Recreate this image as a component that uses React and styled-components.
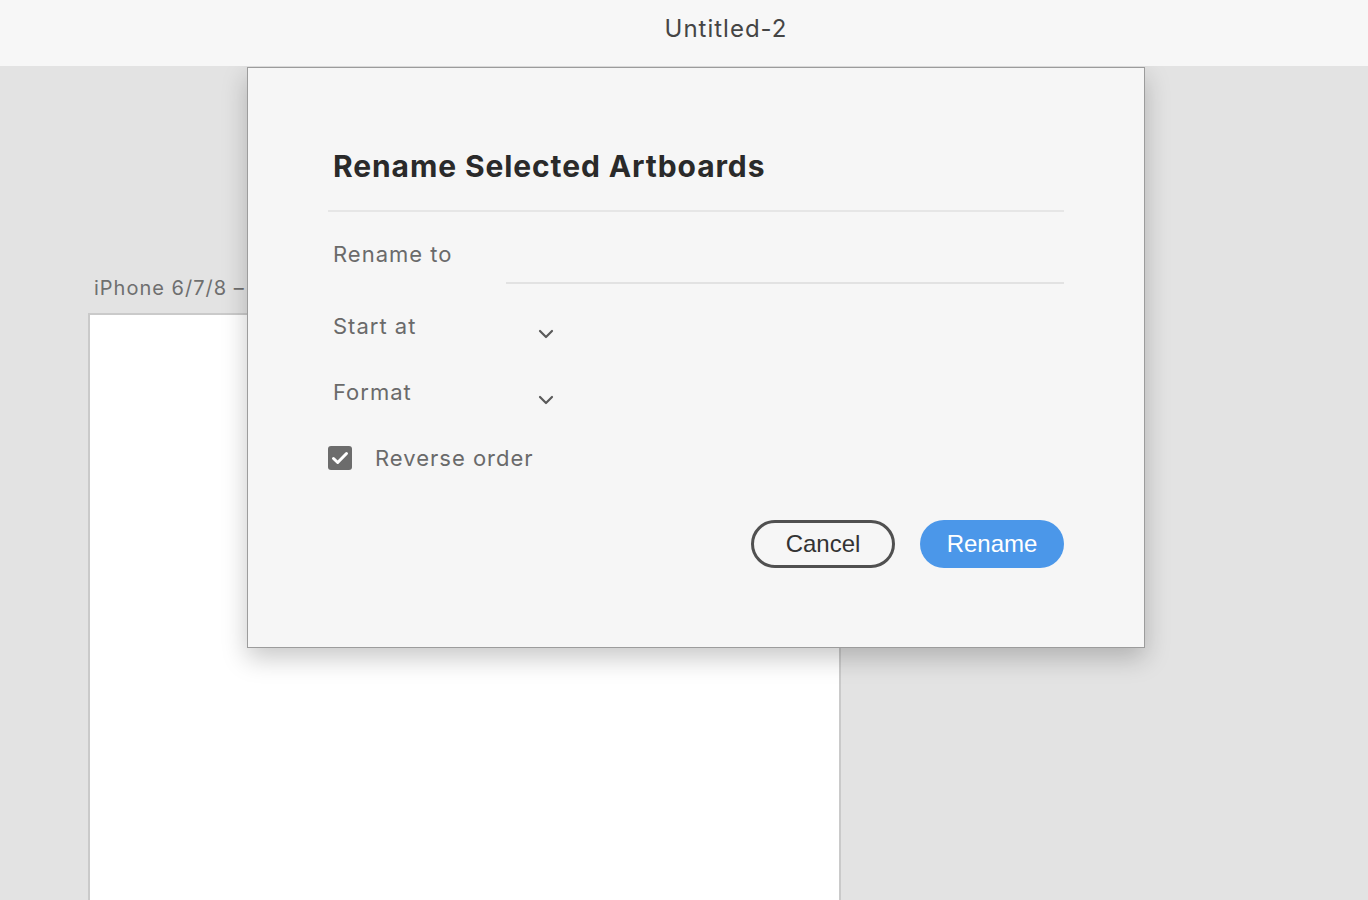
import React from "react";
import styled, { createGlobalStyle } from "styled-components";

const GlobalStyle = createGlobalStyle`
  html, body {
    margin: 0;
    padding: 0;
    overflow: hidden;
  }
  body {
    font-family: Inter, "Noto Sans", sans-serif;
    -webkit-font-smoothing: antialiased;
  }
`;

const Screen = styled.div`
  width: 1368px;
  height: 900px;
  display: flex;
  flex-direction: column;
  background: #e3e3e3;
`;

const TopBar = styled.header`
  height: 66px;
  flex: none;
  background: #f7f7f7;
  display: flex;
  justify-content: center;
  padding-top: 15px;
  box-sizing: border-box;
  padding-left: 84px;
`;

const DocTitle = styled.div`
  font-size: 24px;
  line-height: 28px;
  letter-spacing: 1px;
  color: #454545;
`;

const Canvas = styled.main`
  flex: 1;
  position: relative;
  overflow: hidden;
  padding: 210px 0 0 88px;
`;

const ArtboardLabel = styled.div`
  margin-left: 6px;
  font-size: 20px;
  line-height: 24px;
  letter-spacing: 1px;
  color: #6f6f6f;
`;

const Artboard = styled.div`
  margin-top: 13px;
  width: 749px;
  height: 620px;
  background: #fff;
  border: 2px solid #cacaca;
  border-bottom: none;
`;

const Dialog = styled.section`
  position: absolute;
  left: 247px;
  top: 1px;
  width: 898px;
  height: 581px;
  box-sizing: border-box;
  background: #f6f6f6;
  border: 1px solid #9c9c9c;
  box-shadow: 0 10px 24px rgba(0, 0, 0, 0.22);
  padding: 80px 80px 0 80px;
`;

const Title = styled.h1`
  margin: 0 0 26px 5px;
  font-size: 30px;
  line-height: 36px;
  font-weight: 700;
  color: #2a2a2a;
  letter-spacing: 0.9px;
`;

const Divider = styled.hr`
  margin: 0;
  border: none;
  height: 2px;
  background: #e6e6e6;
`;

const Row = styled.div`
  display: grid;
  grid-template-columns: 178px 1fr;
  align-items: ${(p) => (p.$top ? "start" : "center")};
  height: ${(p) => p.$h}px;
  margin-bottom: ${(p) => p.$mb || 0}px;
`;

const Label = styled.div`
  padding-left: 5px;
  padding-top: ${(p) => p.$pt || 0}px;
  font-size: 22px;
  line-height: 24px;
  letter-spacing: 1px;
  color: #6a6a6a;
`;

const TextField = styled.div`
  height: 70px;
  border-bottom: 2px solid #e2e2e2;
`;

const Select = styled.div`
  width: 48px;
  height: 24px;
  display: flex;
  justify-content: flex-end;
  align-items: flex-end;
  padding-top: 2px;
  color: #5a5a5a;
`;

const CheckRow = styled.div`
  height: 65px;
  display: flex;
  align-items: center;
  gap: 23px;
`;

const CheckBox = styled.span`
  width: 24px;
  height: 24px;
  border-radius: 3px;
  background: #6c6c6c;
  display: flex;
  align-items: center;
  justify-content: center;
`;

const CheckLabel = styled.span`
  font-size: 22px;
  line-height: 24px;
  letter-spacing: 1px;
  color: #6a6a6a;
`;

const Actions = styled.div`
  margin-top: 30px;
  display: flex;
  justify-content: flex-end;
  gap: 25px;
`;

const Button = styled.button`
  width: 144px;
  height: 48px;
  box-sizing: border-box;
  border-radius: 24px;
  font-family: "Liberation Sans", Arial, sans-serif;
  font-size: 24px;
  padding: 0;
  cursor: pointer;
  border: ${(p) => (p.$primary ? "none" : "3px solid #505050")};
  background: ${(p) => (p.$primary ? "#4b97e9" : "transparent")};
  color: ${(p) => (p.$primary ? "#ffffff" : "#333333")};
`;

const Chevron = () => (
  <svg width="16" height="10" viewBox="0 0 16 10" fill="none">
    <path d="M2 2l6 6 6-6" stroke="currentColor" strokeWidth="2.2" strokeLinecap="round" strokeLinejoin="round" />
  </svg>
);

const Check = () => (
  <svg width="18" height="14" viewBox="0 0 18 14" fill="none">
    <path d="M2.5 7.5l4.2 4L15.5 2.5" stroke="#fff" strokeWidth="3" strokeLinecap="round" strokeLinejoin="round" />
  </svg>
);

export default function App() {
  return (
    <Screen>
      <GlobalStyle />
      <TopBar>
        <DocTitle>Untitled-2</DocTitle>
      </TopBar>
      <Canvas>
        <ArtboardLabel>iPhone 6/7/8 – 1</ArtboardLabel>
        <Artboard />
        <Dialog>
          <Title>Rename Selected Artboards</Title>
          <Divider />
          <Row $top $h={72} $mb={9}>
            <Label $pt={30}>Rename to</Label>
            <TextField />
          </Row>
          <Row $h={66}>
            <Label>Start at</Label>
            <Select>
              <Chevron />
            </Select>
          </Row>
          <Row $h={66}>
            <Label>Format</Label>
            <Select>
              <Chevron />
            </Select>
          </Row>
          <CheckRow>
            <CheckBox>
              <Check />
            </CheckBox>
            <CheckLabel>Reverse order</CheckLabel>
          </CheckRow>
          <Actions>
            <Button>Cancel</Button>
            <Button $primary>Rename</Button>
          </Actions>
        </Dialog>
      </Canvas>
    </Screen>
  );
}
